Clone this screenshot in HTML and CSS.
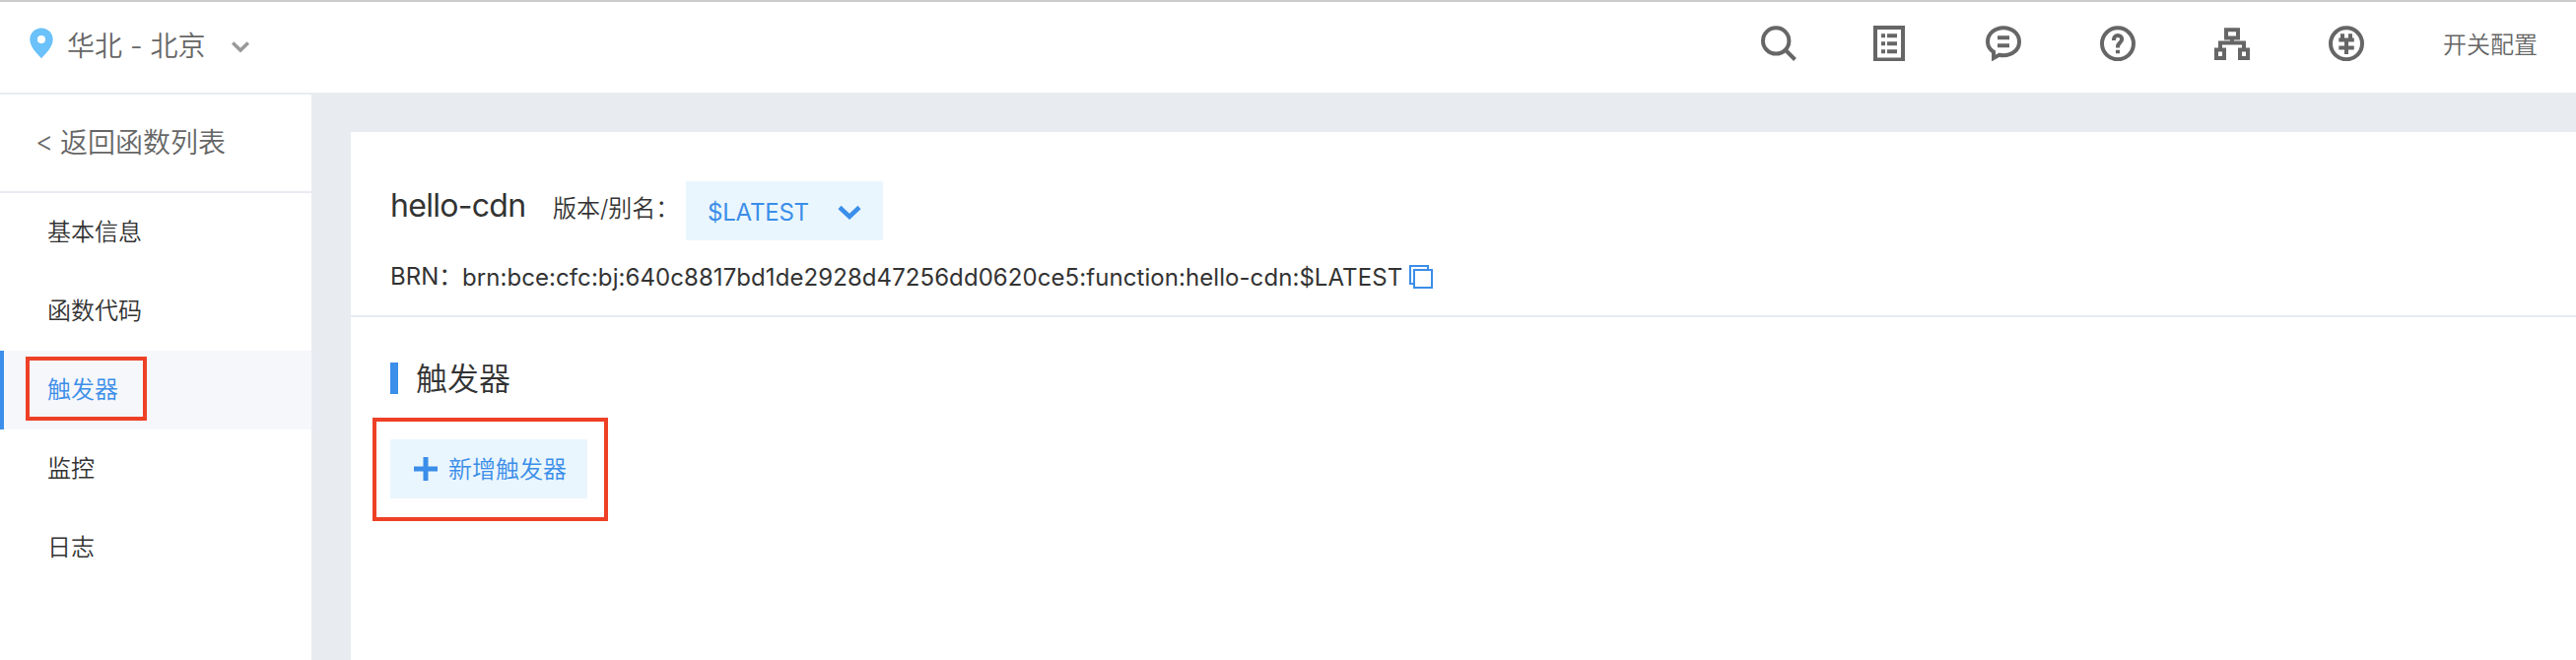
FILE: index.html
```html
<!DOCTYPE html>
<html lang="zh-CN">
<head>
  <meta charset="UTF-8" />
  <meta name="viewport" content="width=device-width, initial-scale=1.0"/>
  <title>函数计算 - 触发器</title>
  <link rel="stylesheet" href="styles.css">
</head>
<body>
  <header class="topbar">
    <div class="region">
      <svg class="pin" width="24" height="32" viewBox="0 0 24 32">
        <path fill-rule="evenodd" d="M12 .5C5.500 .5 .3 5.500 .3 12c0 7.500 7.200 14.500 11.700 19.200C16.500 26.500 23.700 19.500 23.700 12 23.700 5.500 18.500 .5 12 .5zM12 8a4.100 4.100 0 1 1 0 8.200A4.100 4.100 0 0 1 12 8z"/>
      </svg>
      <span class="region-name">华北 - 北京</span>
      <svg class="region-arrow" width="18" height="12" viewBox="0 0 18 12"><path d="M1.200 1.500L9 9l7.800-7.500"/></svg>
    </div>
    <div class="tools">
      <svg class="search" width="36" height="36" viewBox="0 0 36 36">
        <circle cx="15.200" cy="15.400" r="13.200"/>
        <path d="M24.500 24.500l10 10"/>
      </svg>
      <svg width="36" height="36" viewBox="0 0 36 36">
        <path d="M4 2h28v32.500H4z"/>
        <path d="M10 10.300h4M16 10.300h10M10 18.300h4M16 18.300h10M10 26.300h4M16 26.300h10"/>
      </svg>
      <svg width="36" height="36" viewBox="0 0 36 36">
        <path d="M8 33V26.700C4.300 24.300 2 20.500 2 16.400 2 8.400 9 2.300 18 2.300s16 6.100 16 14.100-7 13.900-16 13.900c-1.500 0-3-.2-4.400-.5z"/>
        <path d="M12 12.300h12M12 20.300h12"/>
      </svg>
      <svg width="36" height="36" viewBox="0 0 36 36">
        <circle cx="18" cy="18.300" r="16"/>
        <path d="M14 15v-1c0-2.400 1.600-4 4-4s4.200 1.500 4.200 3.800c0 3.400-4.200 3.600-4.200 7.700v1M18 24.700v3.600"/>
      </svg>
      <svg width="36" height="36" viewBox="0 0 36 36">
        <path d="M12 4.300h12v8.200H12zM18 12v6M6 23v-5.500h24V23M2 24.500h8v8.500H2zM26 24.500h8v8.500h-8z"/>
      </svg>
      <svg width="36" height="36" viewBox="0 0 36 36">
        <circle cx="18" cy="18.300" r="16"/>
        <path d="M14 8.300V14M22 8.300V14M10.300 14.500h15.500M10.300 22.500h15.500M18 14v15"/>
      </svg>
      <a class="config">开关配置</a>
    </div>
  </header>

  <div class="page">
    <aside class="sidebar">
      <a class="back"><span class="back-arrow">&lt;</span>返回函数列表</a>
      <nav>
        <a class="nav-item">基本信息</a>
        <a class="nav-item">函数代码</a>
        <a class="nav-item active">触发器<span class="mark mark-nav"></span></a>
        <a class="nav-item">监控</a>
        <a class="nav-item">日志</a>
      </nav>
    </aside>

    <main class="content">
      <section class="function-head">
        <div class="title-row">
          <h1>hello-cdn</h1>
          <span class="version-label">版本/别名：</span>
          <button class="version">
            <span>$LATEST</span>
            <svg width="24" height="16" viewBox="0 0 24 16"><path d="M2 2.500l10 9.500 10-9.500"/></svg>
          </button>
        </div>
        <div class="brn">
          <span class="brn-label">BRN：</span>
          <span class="brn-value">brn:bce:cfc:bj:640c8817bd1de2928d47256dd0620ce5:function:hello-cdn:$LATEST</span>
          <svg class="copy" width="24" height="24" viewBox="0 0 24 24"><path d="M4 19H1V1h18v3M5 5h18v18H5z"/></svg>
        </div>
      </section>
      <section class="triggers">
        <h2>触发器</h2>
        <button class="add">
          <svg width="24" height="24" viewBox="0 0 24 24"><path d="M0 12h24M12 0v24"/></svg>
          <span class="add-text">新增触发器</span>
          <span class="mark mark-add"></span>
        </button>
      </section>
    </main>
  </div>
</body>
</html>
```
FILE: styles.css
```css
* {
  box-sizing: border-box;
}
body {
  margin: 0;
  height: 670px;
  overflow: hidden;
  display: flex;
  flex-direction: column;
  background: #e8ecf1;
  color: #333;
  font-family: Inter, "Noto Sans CJK SC", sans-serif;
  font-size: 24px;
  font-weight: 350;
}
svg {
  display: block;
  flex: none;
  fill: none;
}
h1, h2 {
  margin: 0;
  font-size: 32px;
  font-weight: inherit;
}
button {
  border: none;
  padding: 0;
  font: inherit;
  color: #3b8ee9;
  background: #eaf6fd;
}

/* top bar */
.topbar {
  height: 96px;
  flex: none;
  display: flex;
  justify-content: space-between;
  background: #fff;
  border-top: 2px solid #ccc;
  border-bottom: 2px solid #e8ecf1;
  color: #666;
}
.region {
  display: flex;
  align-items: center;
  height: 88px;
  padding-left: 30px;
  font-size: 28px;
}
.pin {
  fill: #6bc1f9;
  margin-bottom: 5px;
}
.region-name {
  margin-left: 14px;
  margin-bottom: 3px;
  width: 167px;
  white-space: nowrap;
}
.region-arrow {
  stroke: #999;
  stroke-width: 3.5;
  margin-top: 4px;
}
.tools {
  display: flex;
  align-items: center;
  height: 84px;
  gap: 80px;
  padding-right: 39px;
}
.tools svg {
  stroke: #666;
  stroke-width: 4;
}
.tools .search {
  margin-right: -4px;
}
.config {
  margin-bottom: 2px;
}

.page {
  flex: 1;
  display: flex;
}

/* sidebar */
.sidebar {
  width: 316px;
  flex: none;
  background: #fff;
}
.back {
  display: flex;
  align-items: center;
  height: 100px;
  padding: 0 0 4px 36px;
  border-bottom: 2px solid #e8ecf1;
  font-size: 28px;
  color: #666;
}
.back-arrow {
  width: 25px;
  padding-top: 2px;
}
.nav-item {
  position: relative;
  display: flex;
  align-items: center;
  height: 80px;
  padding: 0 0 5px 48px;
}
.nav-item.active {
  padding-left: 44px;
  border-left: 4px solid #3b8ee9;
  background: #f6f7fb;
  color: #3b8ee9;
}

/* content */
.content {
  flex: 1;
  margin: 38px 0 0 40px;
  background: #fff;
}
.function-head {
  height: 188px;
  padding: 50px 40px 0;
  border-bottom: 2px solid #e8ecf0;
}
.title-row {
  display: flex;
  height: 60px;
  line-height: 50px;
}
.title-row h1 {
  width: 165px;
  font-weight: 400;
  letter-spacing: -0.7px;
  white-space: nowrap;
}
.version-label {
  width: 135px;
  line-height: 56px;
  white-space: nowrap;
}
.version {
  display: flex;
  align-items: center;
  justify-content: space-between;
  width: 200px;
  padding: 0 22px;
  line-height: 60px;
}
.version span {
  padding-top: 3px;
  font-weight: 400;
  letter-spacing: -0.2px;
}
.version svg {
  margin-top: 3px;
  stroke: #3b8ee9;
  stroke-width: 4.5;
}
.brn {
  display: flex;
  align-items: center;
  height: 40px;
  line-height: 40px;
  margin-top: 17px;
  white-space: nowrap;
}
.brn-label {
  width: 73px;
  font-weight: 400;
}
.brn-value {
  width: 961px;
  padding-top: 1px;
  font-weight: 400;
  letter-spacing: 0.07px;
}
.copy {
  stroke: #3b8ee9;
  stroke-width: 2;
}
.triggers {
  padding: 46px 40px;
}
.triggers h2 {
  border-left: 8px solid #3b8ee9;
  padding-left: 18px;
  line-height: 34px;
  height: 32px;
}
.add {
  position: relative;
  display: flex;
  align-items: center;
  gap: 11px;
  width: 200px;
  height: 60px;
  margin-top: 46px;
  padding-left: 24px;
}
.add-text {
  line-height: 56px;
  padding-top: 2px;
}
.add svg {
  stroke: #3b8ee9;
  stroke-width: 5;
}

/* red highlight frames */
.mark {
  position: absolute;
  border: 4px solid #ee4027;
}
.mark-nav {
  left: 22px;
  top: 6px;
  width: 123px;
  height: 65px;
}
.mark-add {
  left: -18px;
  top: -22px;
  width: 239px;
  height: 105px;
}
```
